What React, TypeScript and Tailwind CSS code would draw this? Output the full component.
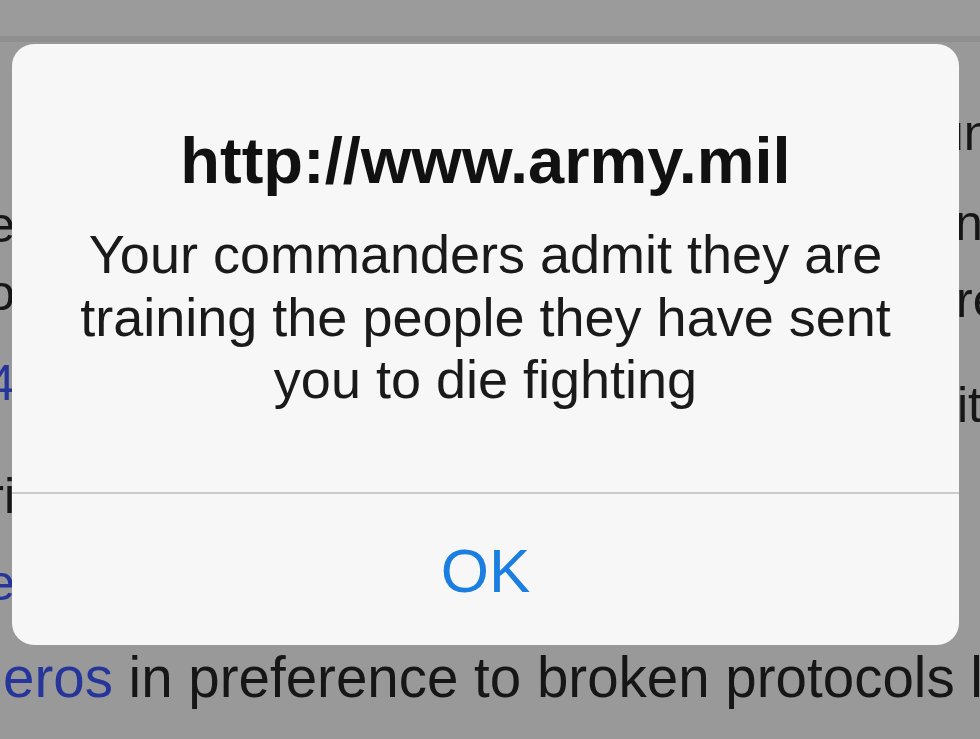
import React from "react";

export default function App() {
  const font = { fontFamily: '"Liberation Sans", Arial, Helvetica, sans-serif' };
  return (
    <div
      className="relative w-[980px] h-[739px] overflow-hidden bg-[#999999] flex flex-col"
      style={font}
    >
      {/* top band */}
      <div className="h-[36px] bg-[#9b9b9b] shrink-0" />
      <div className="h-[6px] bg-[#8f8f8f] shrink-0" />

      {/* background page edges */}
      <div className="h-[604px] shrink-0 flex flex-row text-[50px] leading-[60px] text-[#161616]">
        <div className="w-[15px] shrink-0 overflow-hidden whitespace-nowrap pt-[153px] flex flex-col">
          <div className="h-[68px] flex justify-end"><span>the</span></div>
          <div className="h-[90px] flex justify-end"><span>to</span></div>
          <div className="h-[113px] flex justify-end text-[#25359a]"><span>2014</span></div>
          <div className="h-[87px] flex justify-end"><span>pri</span></div>
          <div className="h-[60px] flex justify-end text-[#25359a]"><span>the</span></div>
        </div>
        <div className="flex-1" />
        <div className="w-[50px] shrink-0 overflow-hidden whitespace-nowrap pt-[61px] flex flex-col">
          <div className="h-[90px] pl-[6px]">un</div>
          <div className="h-[77px] pl-[25px]">n</div>
          <div className="h-[105px] pl-[26px]">re</div>
          <div className="h-[60px] pl-[27px]">it</div>
        </div>
      </div>

      {/* bottom line of page text */}
      <div className="h-[64px] shrink-0 whitespace-nowrap pl-[3px] text-[56.5px] leading-[64px] text-[#161616]">
        <span className="text-[#25359a]">eros</span> in preference to broken protocols l
      </div>

      {/* alert */}
      <div className="absolute left-[12px] top-[44px] w-[947px] h-[601px] rounded-[22px] bg-[#f7f7f7] flex flex-col overflow-hidden">
        <div className="h-[448px] shrink-0 flex flex-col items-center pt-[84px]">
          <div className="text-[65px] leading-[65px] font-bold text-[#111111] whitespace-nowrap">
            http://www.army.mil
          </div>
          <div className="mt-[30px] text-[54px] leading-[62.5px] text-[#1a1a1a] text-center whitespace-nowrap">
            <div>Your commanders admit they are</div>
            <div>training the people they have sent</div>
            <div>you to die fighting</div>
          </div>
        </div>
        <div className="h-[2px] shrink-0 bg-[#cbcbcb]" />
        <div className="flex-1 flex items-center justify-center pt-[2px]">
          <span className="text-[62px] leading-[62px] text-[#1a7fe0]">OK</span>
        </div>
      </div>
    </div>
  );
}
